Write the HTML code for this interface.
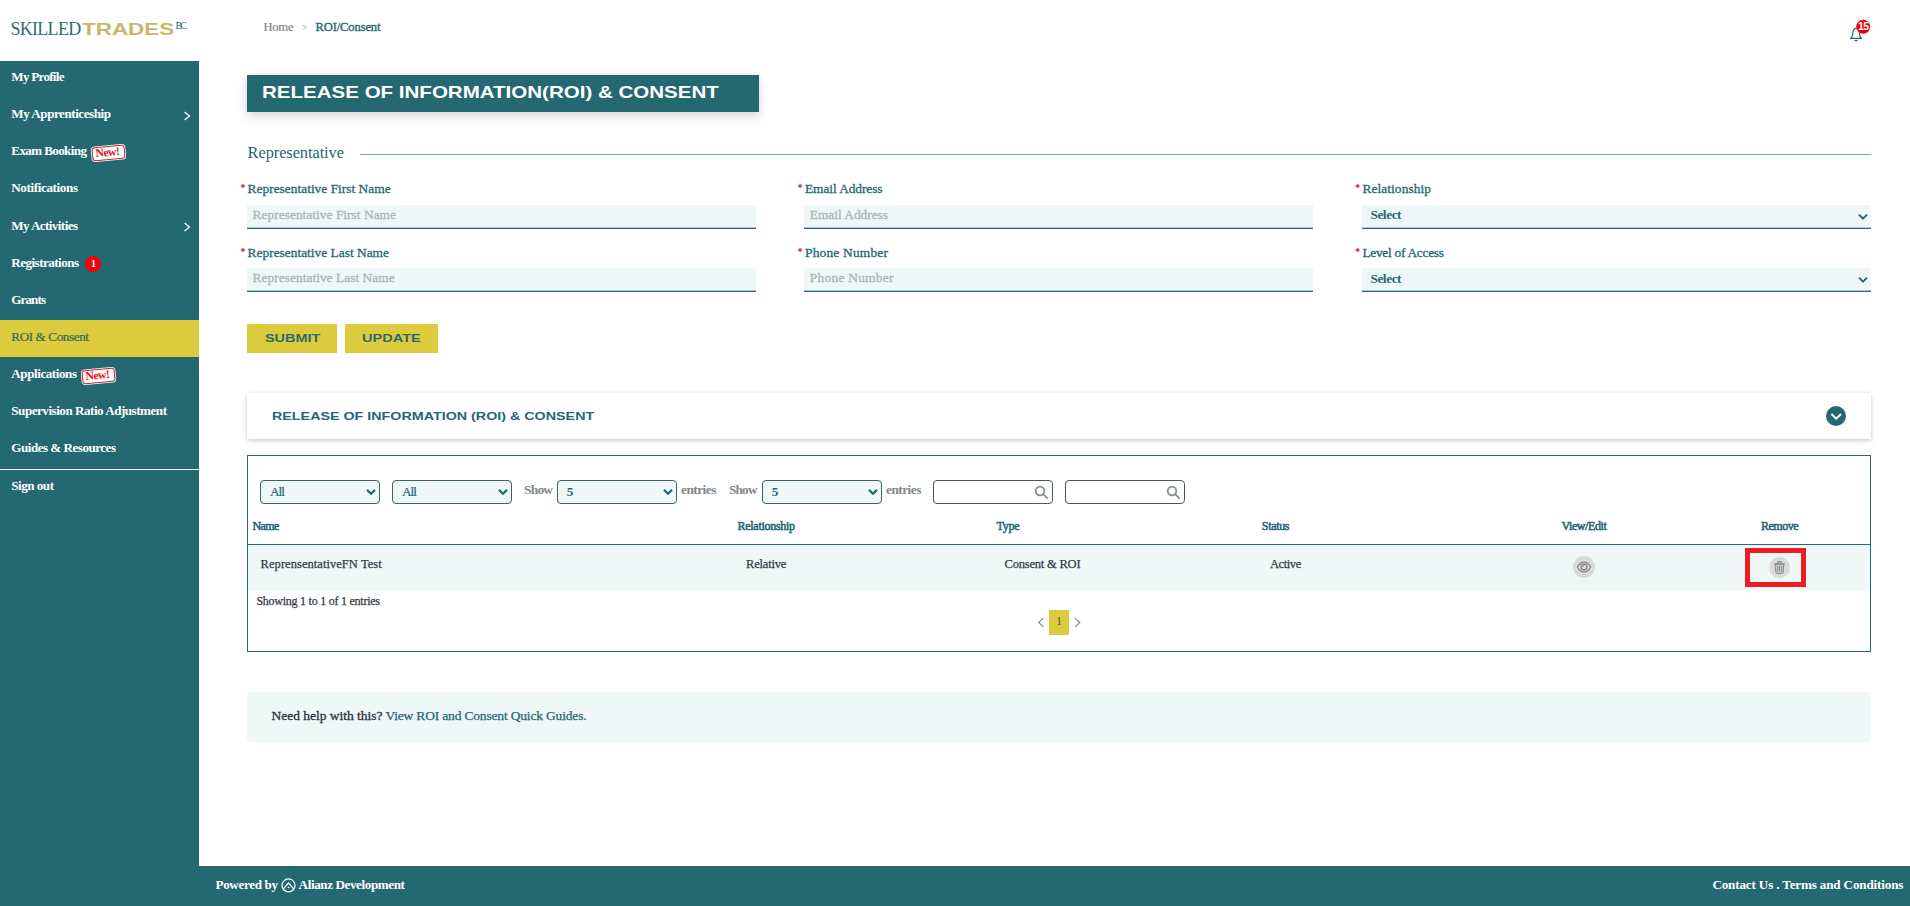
<!DOCTYPE html>
<html lang="en"><head><meta charset="utf-8"><title>ROI/Consent</title>
<style>
*{box-sizing:border-box;margin:0;padding:0}
html,body{width:1910px;height:906px;overflow:hidden;background:#fff}
body{font-family:"Liberation Serif",serif;color:#246871;position:relative}
.t{position:absolute;white-space:nowrap;line-height:normal}
.b{position:absolute}
svg{position:absolute;overflow:visible}
.inp{position:absolute;height:24px;width:509px;background:linear-gradient(#eff7f7 0,#eff7f7 22px,#adc6c9 22px,#adc6c9 23px,#2b6a73 23px,#2b6a73 24px)}
.dd{position:absolute;top:480px;height:24px;width:120px;border:1px solid #3a6268;border-radius:4px;background:#eff7f7}
.sb{position:absolute;top:480px;height:24px;width:120px;border:1px solid #47595c;border-radius:4px;background:#fff}
.new{position:absolute;width:32.8px;height:14px;background:#fff;border:1.4px solid #c9252c;border-radius:3px;transform:rotate(-5deg);box-shadow:0 0 0 0.8px #fff}
.new span{position:absolute;left:2.4px;top:-1.9px;font-size:11.8px;font-weight:bold;color:#e0141a;letter-spacing:-0.55px;line-height:normal;white-space:nowrap}
</style></head><body>
<!-- sidebar -->
<div class="b" style="left:0;top:61px;width:199px;height:845px;background:#246871"></div>
<div class="b" style="left:0;top:320px;width:199px;height:37px;background:#dccb3d"></div>
<div class="b" style="left:0;top:469px;width:199px;height:1px;background:#f4f8f8"></div>
<svg style="left:183px;top:110px" width="9" height="12" viewBox="0 0 9 12"><path d="M1.6 1.9 L6.4 5.9 L1.6 9.9" fill="none" stroke="#fff" stroke-width="1.25"/></svg>
<svg style="left:183px;top:221px" width="9" height="12" viewBox="0 0 9 12"><path d="M1.6 1.9 L6.4 5.9 L1.6 9.9" fill="none" stroke="#fff" stroke-width="1.25"/></svg>
<div class="new" style="left:91.7px;top:146.2px"><span>New!</span></div>
<div class="new" style="left:81.7px;top:369px"><span>New!</span></div>
<div class="b" style="left:85px;top:256.2px;width:16px;height:16px;border-radius:50%;background:#f50008"></div>

<!-- bell -->
<svg style="left:1846px;top:18px" width="28" height="26" viewBox="0 0 28 26"><path d="M4.6 20.4 C6.6 19.2 6.6 17.6 6.8 15.2 C7 11.6 8.4 10.4 10.1 10.4 C11.8 10.4 13.2 11.6 13.4 15.2 C13.6 17.6 13.6 19.2 15.6 20.4 Z" fill="none" stroke="#246871" stroke-width="1.15" stroke-linejoin="round"/><path d="M7.8 21.9 L12.4 21.9 L10.1 23.8 Z" fill="#246871"/><circle cx="17.2" cy="8.8" r="7" fill="#f0000a"/></svg>

<!-- title -->
<div class="b" style="left:247px;top:75px;width:512px;height:37px;background:#246871;box-shadow:0 5px 12px rgba(0,0,0,.13),0 0 6px rgba(0,0,0,.07)"></div>
<div class="b" style="left:360px;top:154px;width:1511px;height:1px;background:#78a7ad"></div>

<!-- inputs -->
<div class="inp" style="left:247px;top:205px"></div>
<div class="inp" style="left:804px;top:205px"></div>
<div class="inp" style="left:1362px;top:205px"></div>
<div class="inp" style="left:247px;top:268px"></div>
<div class="inp" style="left:804px;top:268px"></div>
<div class="inp" style="left:1362px;top:268px"></div>
<svg style="left:1857px;top:212px" width="12" height="10" viewBox="0 0 12 10"><path d="M2 2.6 L6 6.6 L10 2.6" fill="none" stroke="#246871" stroke-width="2"/></svg>
<svg style="left:1857px;top:275px" width="12" height="10" viewBox="0 0 12 10"><path d="M2 2.6 L6 6.6 L10 2.6" fill="none" stroke="#246871" stroke-width="2"/></svg>

<!-- buttons -->
<div class="b" style="left:247px;top:324px;width:90px;height:29px;background:#dccb3d"></div>
<div class="b" style="left:345px;top:324px;width:93px;height:29px;background:#dccb3d"></div>

<!-- accordion -->
<div class="b" style="left:247px;top:393px;width:1624px;height:45.6px;background:#fff;border-radius:0;box-shadow:0 2px 5px rgba(0,0,0,.17),0 0 3px rgba(0,0,0,.07)"></div>
<svg style="left:1826px;top:406px" width="20" height="20" viewBox="0 0 20 20"><circle cx="10" cy="10" r="10" fill="#246871"/><path d="M5.4 8 L10.2 12.6 L15 8" fill="none" stroke="#fff" stroke-width="2"/></svg>

<!-- table -->
<div class="b" style="left:247px;top:455px;width:1624px;height:197px;border:1px solid #2b6a73"></div>
<div class="b" style="left:248px;top:544px;width:1622px;height:46px;background:#eff7f7;border-top:1px solid #2b6a73"></div>
<div class="dd" style="left:260px"></div>
<div class="dd" style="left:392px"></div>
<div class="dd" style="left:557px"></div>
<div class="dd" style="left:762px"></div>
<div class="sb" style="left:933px"></div>
<div class="sb" style="left:1065px"></div>
<svg style="left:365px;top:487px" width="12" height="10" viewBox="0 0 12 10"><path d="M2 2.9 L6 6.7 L10 2.9" fill="none" stroke="#246871" stroke-width="2.2"/></svg>
<svg style="left:497px;top:487px" width="12" height="10" viewBox="0 0 12 10"><path d="M2 2.9 L6 6.7 L10 2.9" fill="none" stroke="#246871" stroke-width="2.2"/></svg>
<svg style="left:662px;top:487px" width="12" height="10" viewBox="0 0 12 10"><path d="M2 2.9 L6 6.7 L10 2.9" fill="none" stroke="#246871" stroke-width="2.2"/></svg>
<svg style="left:867px;top:487px" width="12" height="10" viewBox="0 0 12 10"><path d="M2 2.9 L6 6.7 L10 2.9" fill="none" stroke="#246871" stroke-width="2.2"/></svg>
<svg style="left:1034px;top:485px" width="15" height="15" viewBox="0 0 15 15"><circle cx="6" cy="6" r="4.3" fill="none" stroke="#858a8b" stroke-width="1.7"/><path d="M9.2 9.2 L13.2 13.2" stroke="#8a8f90" stroke-width="1.8" stroke-linecap="round"/></svg>
<svg style="left:1166px;top:485px" width="15" height="15" viewBox="0 0 15 15"><circle cx="6" cy="6" r="4.3" fill="none" stroke="#858a8b" stroke-width="1.7"/><path d="M9.2 9.2 L13.2 13.2" stroke="#8a8f90" stroke-width="1.8" stroke-linecap="round"/></svg>

<!-- row icons -->
<svg style="left:1573px;top:556.2px" width="22" height="22" viewBox="0 0 22 22"><circle cx="11" cy="11" r="11" fill="#d9dbdb"/><path d="M4.4 11 C6.4 7.4 8.8 6 11 6 C13.2 6 15.6 7.4 17.6 11 C15.6 14.6 13.2 16 11 16 C8.8 16 6.4 14.6 4.4 11 Z" fill="none" stroke="#767a7b" stroke-width="1.1"/><circle cx="11" cy="11" r="2.9" fill="none" stroke="#767a7b" stroke-width="1.1"/><path d="M9.7 11 A1.4 1.4 0 0 1 11.1 9.6" fill="none" stroke="#7a7d7e" stroke-width="0.8"/></svg>
<svg style="left:1769px;top:556.7px" width="21" height="21" viewBox="0 0 21 21"><circle cx="10.5" cy="10.5" r="10.5" fill="#d9dbdb"/><path d="M6.2 7.2 L6.9 15.6 Q7 16.4 7.8 16.4 L13.2 16.4 Q14 16.4 14.1 15.6 L14.8 7.2 Z" fill="#c9cccc" stroke="#868a8b" stroke-width="1"/><path d="M5.2 7 L15.8 7" stroke="#868a8b" stroke-width="1.1"/><path d="M8.4 6.8 Q8.4 4.6 10.5 4.6 Q12.6 4.6 12.6 6.8" fill="none" stroke="#868a8b" stroke-width="1.1"/><path d="M8.6 9 L8.6 14.6 M10.5 9 L10.5 14.6 M12.4 9 L12.4 14.6" stroke="#868a8b" stroke-width="0.9"/></svg>
<div class="b" style="left:1745px;top:548px;width:61px;height:39px;border:5px solid #ed1c24"></div>

<!-- pagination -->
<div class="b" style="left:1049px;top:610px;width:20px;height:25px;background:#dccb3d"></div>
<svg style="left:1036px;top:616px" width="10" height="13" viewBox="0 0 10 13"><path d="M7.4 2.2 L2.6 6.5 L7.4 10.8" fill="none" stroke="#7f8789" stroke-width="1.1"/></svg>
<svg style="left:1072px;top:616px" width="10" height="13" viewBox="0 0 10 13"><path d="M3 2.2 L7.8 6.5 L3 10.8" fill="none" stroke="#7f8789" stroke-width="1.1"/></svg>

<!-- help -->
<div class="b" style="left:247px;top:692.4px;width:1624px;height:49.2px;background:#eff7f7;border-radius:4px"></div>

<!-- footer -->
<div class="b" style="left:199px;top:866px;width:1711px;height:40px;background:#246871"></div>
<svg style="left:280.5px;top:878.3px" width="15" height="15" viewBox="0 0 15 15"><circle cx="7.5" cy="7.45" r="6.5" fill="none" stroke="#fff" stroke-width="1.2"/><path d="M1.9 11.5 L7.5 4.9 L13.1 11.5" fill="none" stroke="#fff" stroke-width="1.25"/><circle cx="7.5" cy="9.5" r="0.85" fill="#fff"/></svg>

<!-- asterisks -->
<div class="t" style="left:240.4px;top:182.6px;font-size:9.5px;font-weight:bold;color:#e3001b">*</div>
<div class="t" style="left:797.8px;top:182.6px;font-size:9.5px;font-weight:bold;color:#e3001b">*</div>
<div class="t" style="left:1355.2px;top:182.6px;font-size:9.5px;font-weight:bold;color:#e3001b">*</div>
<div class="t" style="left:240.4px;top:246.6px;font-size:9.5px;font-weight:bold;color:#e3001b">*</div>
<div class="t" style="left:797.8px;top:246.6px;font-size:9.5px;font-weight:bold;color:#e3001b">*</div>
<div class="t" style="left:1355.2px;top:246.6px;font-size:9.5px;font-weight:bold;color:#e3001b">*</div>

<div class="t" style='left:10.40px;top:18.50px;font-family:"Liberation Serif",serif;font-size:18px;font-weight:normal;color:#336b73;letter-spacing:-0.700px;'>SKILLED</div>
<div class="t" style='left:82.40px;top:18.50px;font-family:"Liberation Sans",sans-serif;font-size:17.4px;font-weight:bold;color:#c9b66c;transform:scaleX(1.2895);transform-origin:0 0;'>TRADES</div>
<div class="t" style='left:175.50px;top:20.00px;font-family:"Liberation Serif",serif;font-size:10px;font-weight:normal;color:#2f6b73;letter-spacing:-1.844px;'>BC</div>
<div class="t" style='left:263.50px;top:20.00px;font-family:"Liberation Serif",serif;font-size:12.6px;font-weight:normal;color:#7b8489;-webkit-text-stroke:0.2px #7b8489;letter-spacing:-0.260px;'>Home</div>
<div class="t" style='left:302.00px;top:22.60px;font-family:"Liberation Serif",serif;font-size:9.5px;font-weight:normal;color:#7b8489;letter-spacing:0.000px;'>&gt;</div>
<div class="t" style='left:315.50px;top:20.00px;font-family:"Liberation Serif",serif;font-size:12.6px;font-weight:normal;color:#246871;-webkit-text-stroke:0.35px #246871;letter-spacing:-0.147px;'>ROI/Consent</div>
<div class="t" style='left:11.30px;top:69.00px;font-family:"Liberation Serif",serif;font-size:13.1px;font-weight:bold;color:#fff;letter-spacing:-0.728px;'>My Profile</div>
<div class="t" style='left:11.30px;top:106.00px;font-family:"Liberation Serif",serif;font-size:13.1px;font-weight:bold;color:#fff;letter-spacing:-0.461px;'>My Apprenticeship</div>
<div class="t" style='left:11.30px;top:143.00px;font-family:"Liberation Serif",serif;font-size:13.1px;font-weight:bold;color:#fff;letter-spacing:-0.627px;'>Exam Booking</div>
<div class="t" style='left:11.30px;top:180.00px;font-family:"Liberation Serif",serif;font-size:13.1px;font-weight:bold;color:#fff;letter-spacing:-0.382px;'>Notifications</div>
<div class="t" style='left:11.30px;top:218.00px;font-family:"Liberation Serif",serif;font-size:13.1px;font-weight:bold;color:#fff;letter-spacing:-0.593px;'>My Activities</div>
<div class="t" style='left:11.30px;top:255.00px;font-family:"Liberation Serif",serif;font-size:13.1px;font-weight:bold;color:#fff;letter-spacing:-0.542px;'>Registrations</div>
<div class="t" style='left:11.30px;top:292.00px;font-family:"Liberation Serif",serif;font-size:13.1px;font-weight:bold;color:#fff;letter-spacing:-0.916px;'>Grants</div>
<div class="t" style='left:11.30px;top:366.00px;font-family:"Liberation Serif",serif;font-size:13.1px;font-weight:bold;color:#fff;letter-spacing:-0.443px;'>Applications</div>
<div class="t" style='left:11.30px;top:403.00px;font-family:"Liberation Serif",serif;font-size:13.1px;font-weight:bold;color:#fff;letter-spacing:-0.485px;'>Supervision Ratio Adjustment</div>
<div class="t" style='left:11.30px;top:440.00px;font-family:"Liberation Serif",serif;font-size:13.1px;font-weight:bold;color:#fff;letter-spacing:-0.502px;'>Guides &amp; Resources</div>
<div class="t" style='left:11.30px;top:478.00px;font-family:"Liberation Serif",serif;font-size:13.1px;font-weight:bold;color:#fff;letter-spacing:-0.503px;'>Sign out</div>
<div class="t" style='left:11.30px;top:329.00px;font-family:"Liberation Serif",serif;font-size:13.1px;font-weight:normal;color:#2c6a5f;-webkit-text-stroke:0.2px #2c6a5f;letter-spacing:-0.375px;'>ROI &amp; Consent</div>
<div class="t" style='left:262.00px;top:84.00px;font-family:"Liberation Sans",sans-serif;font-size:15.7px;font-weight:bold;color:#fff;transform:scaleX(1.3082);transform-origin:0 0;'>RELEASE OF INFORMATION(ROI) &amp; CONSENT</div>
<div class="t" style='left:247.60px;top:142.60px;font-family:"Liberation Serif",serif;font-size:16.4px;font-weight:normal;color:#246871;letter-spacing:-0.077px;'>Representative</div>
<div class="t" style='left:247.60px;top:181.00px;font-family:"Liberation Serif",serif;font-size:13.4px;font-weight:normal;color:#246871;-webkit-text-stroke:0.3px #246871;letter-spacing:0.008px;'>Representative First Name</div>
<div class="t" style='left:805.00px;top:181.00px;font-family:"Liberation Serif",serif;font-size:13.4px;font-weight:normal;color:#246871;-webkit-text-stroke:0.3px #246871;letter-spacing:-0.074px;'>Email Address</div>
<div class="t" style='left:1362.40px;top:181.00px;font-family:"Liberation Serif",serif;font-size:13.4px;font-weight:normal;color:#246871;-webkit-text-stroke:0.3px #246871;letter-spacing:0.082px;'>Relationship</div>
<div class="t" style='left:247.60px;top:245.00px;font-family:"Liberation Serif",serif;font-size:13.4px;font-weight:normal;color:#246871;-webkit-text-stroke:0.3px #246871;letter-spacing:0.004px;'>Representative Last Name</div>
<div class="t" style='left:805.00px;top:245.00px;font-family:"Liberation Serif",serif;font-size:13.4px;font-weight:normal;color:#246871;-webkit-text-stroke:0.3px #246871;letter-spacing:0.207px;'>Phone Number</div>
<div class="t" style='left:1362.40px;top:245.00px;font-family:"Liberation Serif",serif;font-size:13.4px;font-weight:normal;color:#246871;-webkit-text-stroke:0.3px #246871;letter-spacing:-0.280px;'>Level of Access</div>
<div class="t" style='left:252.60px;top:206.60px;font-family:"Liberation Serif",serif;font-size:13.4px;font-weight:normal;color:#adb5b6;-webkit-text-stroke:0.3px #adb5b6;letter-spacing:0.025px;'>Representative First Name</div>
<div class="t" style='left:809.80px;top:206.60px;font-family:"Liberation Serif",serif;font-size:13.4px;font-weight:normal;color:#adb5b6;-webkit-text-stroke:0.3px #adb5b6;letter-spacing:-0.024px;'>Email Address</div>
<div class="t" style='left:252.60px;top:269.80px;font-family:"Liberation Serif",serif;font-size:13.4px;font-weight:normal;color:#adb5b6;-webkit-text-stroke:0.3px #adb5b6;letter-spacing:0.031px;'>Representative Last Name</div>
<div class="t" style='left:809.80px;top:269.80px;font-family:"Liberation Serif",serif;font-size:13.4px;font-weight:normal;color:#adb5b6;-webkit-text-stroke:0.3px #adb5b6;letter-spacing:0.262px;'>Phone Number</div>
<div class="t" style='left:1370.40px;top:207.00px;font-family:"Liberation Serif",serif;font-size:13.4px;font-weight:bold;color:#246871;letter-spacing:-0.454px;'>Select</div>
<div class="t" style='left:1370.40px;top:270.80px;font-family:"Liberation Serif",serif;font-size:13.4px;font-weight:bold;color:#246871;letter-spacing:-0.454px;'>Select</div>
<div class="t" style='left:264.80px;top:331.80px;font-family:"Liberation Sans",sans-serif;font-size:10.9px;font-weight:bold;color:#2a6a6b;transform:scaleX(1.3222);transform-origin:0 0;'>SUBMIT</div>
<div class="t" style='left:362.20px;top:331.80px;font-family:"Liberation Sans",sans-serif;font-size:10.9px;font-weight:bold;color:#2a6a6b;transform:scaleX(1.3373);transform-origin:0 0;'>UPDATE</div>
<div class="t" style='left:271.80px;top:410.00px;font-family:"Liberation Sans",sans-serif;font-size:11.1px;font-weight:bold;color:#246871;transform:scaleX(1.2887);transform-origin:0 0;'>RELEASE OF INFORMATION (ROI) &amp; CONSENT</div>
<div class="t" style='left:270.00px;top:484.00px;font-family:"Liberation Serif",serif;font-size:13.4px;font-weight:normal;color:#246871;-webkit-text-stroke:0.2px #246871;letter-spacing:-1.062px;'>All</div>
<div class="t" style='left:402.00px;top:484.00px;font-family:"Liberation Serif",serif;font-size:13.4px;font-weight:normal;color:#246871;-webkit-text-stroke:0.2px #246871;letter-spacing:-1.062px;'>All</div>
<div class="t" style='left:524.00px;top:482.40px;font-family:"Liberation Serif",serif;font-size:13.4px;font-weight:bold;color:#80888a;letter-spacing:-0.755px;'>Show</div>
<div class="t" style='left:729.00px;top:482.40px;font-family:"Liberation Serif",serif;font-size:13.4px;font-weight:bold;color:#80888a;letter-spacing:-0.889px;'>Show</div>
<div class="t" style='left:681.00px;top:482.40px;font-family:"Liberation Serif",serif;font-size:13.4px;font-weight:bold;color:#80888a;letter-spacing:-0.545px;'>entries</div>
<div class="t" style='left:886.00px;top:482.40px;font-family:"Liberation Serif",serif;font-size:13.4px;font-weight:bold;color:#80888a;letter-spacing:-0.545px;'>entries</div>
<div class="t" style='left:566.80px;top:483.60px;font-family:"Liberation Serif",serif;font-size:13.2px;font-weight:bold;color:#246871;letter-spacing:0.000px;'>5</div>
<div class="t" style='left:771.80px;top:483.60px;font-family:"Liberation Serif",serif;font-size:13.2px;font-weight:bold;color:#246871;letter-spacing:0.000px;'>5</div>
<div class="t" style='left:252.40px;top:519.00px;font-family:"Liberation Serif",serif;font-size:12px;font-weight:normal;color:#246871;-webkit-text-stroke:0.55px #246871;letter-spacing:-0.552px;'>Name</div>
<div class="t" style='left:737.60px;top:519.00px;font-family:"Liberation Serif",serif;font-size:12px;font-weight:normal;color:#246871;-webkit-text-stroke:0.55px #246871;letter-spacing:-0.297px;'>Relationship</div>
<div class="t" style='left:996.60px;top:519.00px;font-family:"Liberation Serif",serif;font-size:12px;font-weight:normal;color:#246871;-webkit-text-stroke:0.55px #246871;letter-spacing:-0.276px;'>Type</div>
<div class="t" style='left:1261.80px;top:519.00px;font-family:"Liberation Serif",serif;font-size:12px;font-weight:normal;color:#246871;-webkit-text-stroke:0.55px #246871;letter-spacing:-0.329px;'>Status</div>
<div class="t" style='left:1561.50px;top:519.00px;font-family:"Liberation Serif",serif;font-size:12px;font-weight:normal;color:#246871;-webkit-text-stroke:0.55px #246871;letter-spacing:-0.414px;'>View/Edit</div>
<div class="t" style='left:1761.00px;top:519.00px;font-family:"Liberation Serif",serif;font-size:12px;font-weight:normal;color:#246871;-webkit-text-stroke:0.55px #246871;letter-spacing:-0.500px;'>Remove</div>
<div class="t" style='left:260.60px;top:557.00px;font-family:"Liberation Serif",serif;font-size:12.5px;font-weight:normal;color:#333a45;-webkit-text-stroke:0.25px #333a45;letter-spacing:0.049px;'>ReprensentativeFN Test</div>
<div class="t" style='left:746.00px;top:557.00px;font-family:"Liberation Serif",serif;font-size:12.5px;font-weight:normal;color:#333a45;-webkit-text-stroke:0.25px #333a45;letter-spacing:-0.179px;'>Relative</div>
<div class="t" style='left:1004.60px;top:557.00px;font-family:"Liberation Serif",serif;font-size:12.5px;font-weight:normal;color:#333a45;-webkit-text-stroke:0.25px #333a45;letter-spacing:-0.207px;'>Consent &amp; ROI</div>
<div class="t" style='left:1270.00px;top:557.00px;font-family:"Liberation Serif",serif;font-size:12.5px;font-weight:normal;color:#333a45;-webkit-text-stroke:0.25px #333a45;letter-spacing:-0.426px;'>Active</div>
<div class="t" style='left:256.40px;top:594.00px;font-family:"Liberation Serif",serif;font-size:12px;font-weight:normal;color:#333a45;-webkit-text-stroke:0.25px #333a45;letter-spacing:-0.246px;'>Showing 1 to 1 of 1 entries</div>
<div class="t" style='left:1056.20px;top:615.00px;font-family:"Liberation Serif",serif;font-size:11.5px;font-weight:normal;color:#3a5a4a;letter-spacing:0.000px;'>1</div>
<div class="t" style='left:271.60px;top:708.00px;font-family:"Liberation Serif",serif;font-size:13.5px;font-weight:normal;color:#2d333b;-webkit-text-stroke:0.3px #2d333b;letter-spacing:-0.029px;'>Need help with this?</div>
<div class="t" style='left:385.40px;top:708.00px;font-family:"Liberation Serif",serif;font-size:13.5px;font-weight:normal;color:#246871;-webkit-text-stroke:0.25px #246871;letter-spacing:-0.173px;'>View ROI and Consent Quick Guides.</div>
<div class="t" style='left:215.50px;top:877.00px;font-family:"Liberation Serif",serif;font-size:13.1px;font-weight:bold;color:#fff;letter-spacing:-0.344px;'>Powered by</div>
<div class="t" style='left:298.60px;top:877.00px;font-family:"Liberation Serif",serif;font-size:13.1px;font-weight:bold;color:#fff;letter-spacing:-0.395px;'>Alianz Development</div>
<div class="t" style='left:1712.40px;top:877.00px;font-family:"Liberation Serif",serif;font-size:13.1px;font-weight:bold;color:#fff;letter-spacing:-0.147px;'>Contact Us . Terms and Conditions</div>
<div class="t" style='left:1857.90px;top:19.80px;font-family:"Liberation Sans",sans-serif;font-size:10.5px;font-weight:bold;color:#fff;letter-spacing:-0.588px;'>15</div>
<div class="t" style='left:91.00px;top:258.30px;font-family:"Liberation Serif",serif;font-size:10px;font-weight:bold;color:#fff;letter-spacing:0.000px;'>1</div>
</body></html>
